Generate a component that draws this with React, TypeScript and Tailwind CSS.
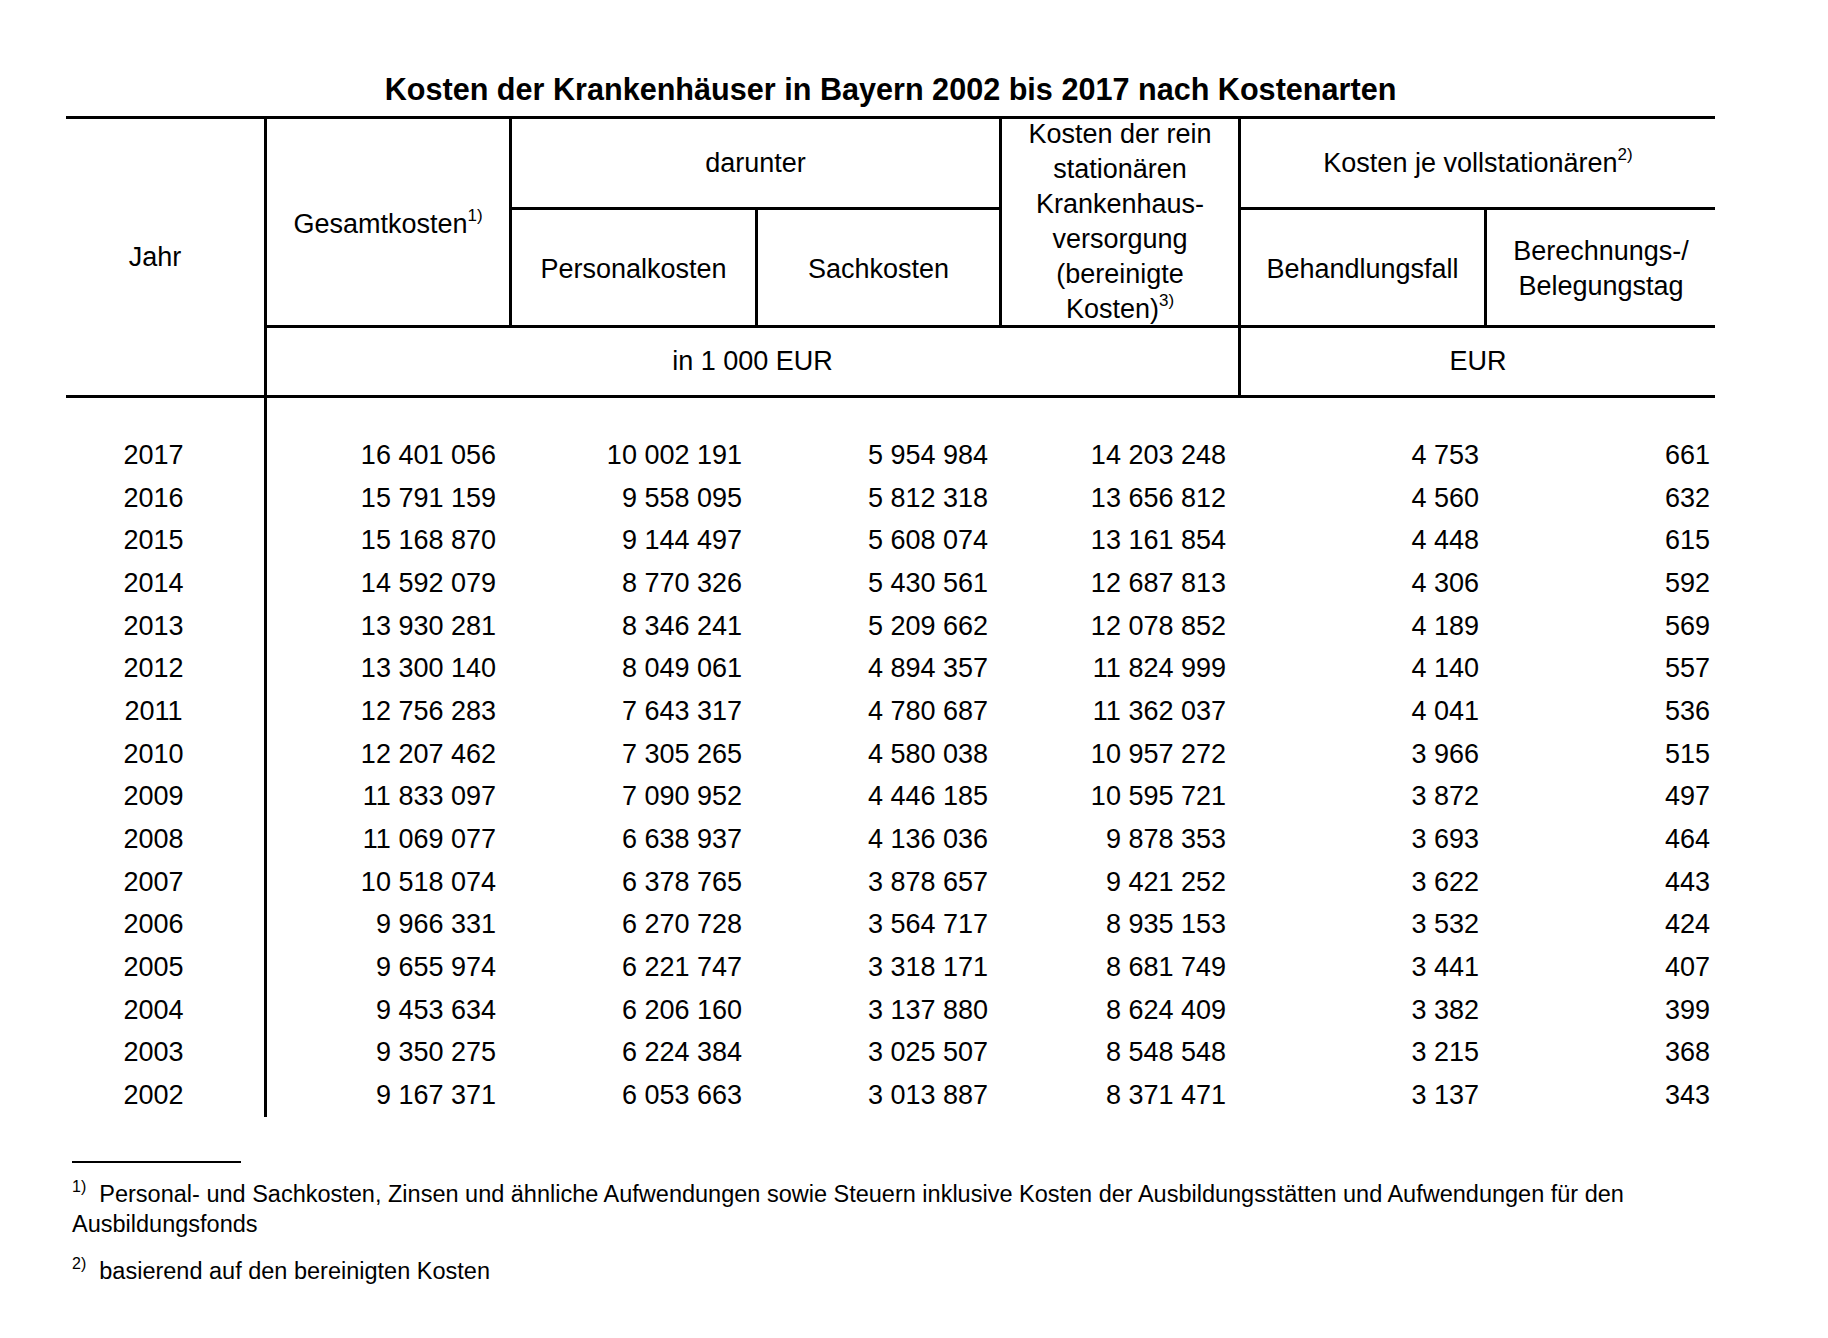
const rows: [string, string, string, string, string, string, string][] = [
  ['2017', '16 401 056', '10 002 191', '5 954 984', '14 203 248', '4 753', '661'],
  ['2016', '15 791 159', '9 558 095', '5 812 318', '13 656 812', '4 560', '632'],
  ['2015', '15 168 870', '9 144 497', '5 608 074', '13 161 854', '4 448', '615'],
  ['2014', '14 592 079', '8 770 326', '5 430 561', '12 687 813', '4 306', '592'],
  ['2013', '13 930 281', '8 346 241', '5 209 662', '12 078 852', '4 189', '569'],
  ['2012', '13 300 140', '8 049 061', '4 894 357', '11 824 999', '4 140', '557'],
  ['2011', '12 756 283', '7 643 317', '4 780 687', '11 362 037', '4 041', '536'],
  ['2010', '12 207 462', '7 305 265', '4 580 038', '10 957 272', '3 966', '515'],
  ['2009', '11 833 097', '7 090 952', '4 446 185', '10 595 721', '3 872', '497'],
  ['2008', '11 069 077', '6 638 937', '4 136 036', '9 878 353', '3 693', '464'],
  ['2007', '10 518 074', '6 378 765', '3 878 657', '9 421 252', '3 622', '443'],
  ['2006', '9 966 331', '6 270 728', '3 564 717', '8 935 153', '3 532', '424'],
  ['2005', '9 655 974', '6 221 747', '3 318 171', '8 681 749', '3 441', '407'],
  ['2004', '9 453 634', '6 206 160', '3 137 880', '8 624 409', '3 382', '399'],
  ['2003', '9 350 275', '6 224 384', '3 025 507', '8 548 548', '3 215', '368'],
  ['2002', '9 167 371', '6 053 663', '3 013 887', '8 371 471', '3 137', '343'],
];

const cols = 'grid grid-cols-[201px_245px_246px_244px_239px_246px_228px]';

export default function App() {
  return (
    <div className="w-[1828px] h-[1338px] bg-white text-black font-['Liberation_Sans',Arial,sans-serif] pl-[66px] pt-[71px]">
      <div className="w-[1649px]">
        <h1 className="text-center text-[30.6px] leading-[36px] font-bold">
          Kosten der Krankenhäuser in Bayern 2002 bis 2017 nach Kostenarten
        </h1>

        {/* header */}
        <div className={`${cols} grid-rows-[91px_118px_67px] mt-[9px] border-t-[3px] border-b-[3px] border-black text-[27px] leading-[35px] text-center`}>
          <div className="row-span-3 border-r-[3px] border-black flex items-center justify-center pr-[20px]">Jahr</div>
          <div className="row-span-2 border-r-[3px] border-b-[3px] border-black flex items-center justify-center pt-[4px]">
            <span>
              Gesamtkosten<sup className="text-[17px] -top-[12px]">1)</sup>
            </span>
          </div>
          <div className="col-span-2 border-r-[3px] border-b-[3px] border-black flex items-center justify-center">darunter</div>
          <div className="row-span-2 border-r-[3px] border-b-[3px] border-black flex items-center justify-center">
            <span>
              Kosten der rein
              <br />
              stationären
              <br />
              Krankenhaus-
              <br />
              versorgung
              <br />
              (bereinigte
              <br />
              Kosten)<sup className="text-[17px] -top-[12px]">3)</sup>
            </span>
          </div>
          <div className="col-span-2 border-b-[3px] border-black flex items-center justify-center">
            <span>
              Kosten je vollstationären<sup className="text-[17px] -top-[12px]">2)</sup>
            </span>
          </div>
          <div className="border-r-[3px] border-b-[3px] border-black flex items-center justify-center pt-[4px]">Personalkosten</div>
          <div className="border-r-[3px] border-b-[3px] border-black flex items-center justify-center pt-[4px]">Sachkosten</div>
          <div className="border-r-[3px] border-b-[3px] border-black flex items-center justify-center pt-[4px]">Behandlungsfall</div>
          <div className="border-b-[3px] border-black flex items-center justify-center pt-[2px]">
            Berechnungs-/
            <br />
            Belegungstag
          </div>
          <div className="col-span-4 border-r-[3px] border-black flex items-center justify-center">in 1 000 EUR</div>
          <div className="col-span-2 flex items-center justify-center">EUR</div>
        </div>

        {/* body */}
        <div className="text-[27px] leading-[42.67px]">
          <div className={cols}>
            <div className="h-[36px] border-r-[3px] border-black" />
          </div>
          {rows.map((r) => (
            <div key={r[0]} className={`${cols} h-[42.67px]`}>
              <div className="border-r-[3px] border-black text-center pr-[23px]">{r[0]}</div>
              <div className="text-right pr-[16px]">{r[1]}</div>
              <div className="text-right pr-[16px]">{r[2]}</div>
              <div className="text-right pr-[14px]">{r[3]}</div>
              <div className="text-right pr-[15px]">{r[4]}</div>
              <div className="text-right pr-[8px]">{r[5]}</div>
              <div className="text-right pr-[5px]">{r[6]}</div>
            </div>
          ))}
        </div>

        {/* footnotes */}
        <div className="mt-[44px] pl-[6px] text-[23.5px] leading-[30px]">
          <div className="w-[169px] border-t-2 border-black" />
          <p className="mt-[16px]">
            <sup className="text-[16px] -top-[10px]">1)</sup>&nbsp; Personal- und Sachkosten, Zinsen und ähnliche Aufwendungen sowie Steuern inklusive Kosten der Ausbildungsstätten und Aufwendungen für den
            <br />
            Ausbildungsfonds
          </p>
          <p className="mt-[17px]">
            <sup className="text-[16px] -top-[10px]">2)</sup>&nbsp; basierend auf den bereinigten Kosten
          </p>
        </div>
      </div>
    </div>
  );
}
